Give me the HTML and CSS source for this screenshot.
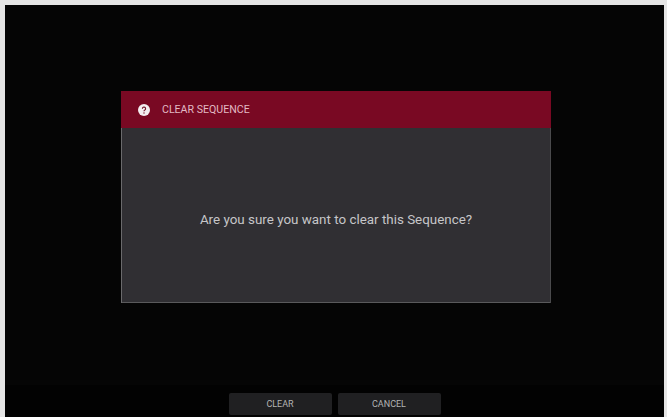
FILE: index.html
```html
<!DOCTYPE html>
<html lang="en">
  <head>
    <meta charset="UTF-8" />
    <meta name="viewport" content="width=device-width, initial-scale=1.0" />
    <title>Clear Sequence</title>
    <link rel="stylesheet" href="styles.css">
  </head>

  <body>
    <div class="screen">
      <div class="main">
        <div class="dialog">
          <div class="dialog-header">
            <svg class="help-icon" width="12" height="12" viewBox="0 0 12 12">
              <circle cx="6" cy="6" r="6" fill="#f4eef0" />
              <path d="M4.4 4.7a1.6 1.6 0 1 1 2.4 1.4c-.6.3-.8.6-.8 1.1" fill="none" stroke="#6f1226" stroke-width="1.1" />
              <circle cx="6" cy="9" r=".7" fill="#6f1226" />
            </svg>
            <span class="dialog-title">CLEAR SEQUENCE</span>
          </div>
          <div class="dialog-body">
            <p class="dialog-text">Are you sure you want to clear this Sequence?</p>
          </div>
        </div>
      </div>

      <div class="toolbar">
        <button class="toolbar-button">CLEAR</button>
        <button class="toolbar-button">CANCEL</button>
      </div>
    </div>
  </body>
</html>
```

FILE: styles.css
```css
html,
body {
  height: 100%;
}

body {
  margin: 0;
  padding: 5px 3px 0 5px;
  box-sizing: border-box;
  background-color: #e6e6e6;
  font-family: Roboto, "Liberation Sans", sans-serif;
  overflow: hidden;
}

.screen {
  display: flex;
  flex-direction: column;
  height: 100%;
  background-color: #050505;
}

.main {
  flex: 1;
  padding-top: 86px;
  padding-left: 116px;
}

.dialog {
  width: 430px;
  height: 212px;
  display: flex;
  flex-direction: column;
  box-shadow: inset 1px 0 0 #6a6a6c, inset -1px 0 0 #4a4a4c, inset 0 -1px 0 #5a5a5c;
  background-color: #302f33;
}

.dialog-header {
  height: 37px;
  display: flex;
  align-items: center;
  gap: 12px;
  padding-left: 17px;
  background-color: #790923;
}

.help-icon {
  flex: none;
}

.dialog-title {
  font-size: 10.6px;
  color: #e2b9c3;
}

.dialog-body {
  flex: 1;
  display: flex;
  justify-content: center;
  padding-top: 84px;
}

.dialog-text {
  margin: 0;
  font-size: 13.4px;
  line-height: 16px;
  color: #c6c6c8;
}

.toolbar {
  height: 32px;
  display: flex;
  justify-content: center;
  gap: 6px;
  padding-top: 8px;
  box-sizing: border-box;
  background-color: #020202;
}

.toolbar-button {
  width: 103px;
  height: 22px;
  border: none;
  border-radius: 2px;
  padding: 0;
  font-family: inherit;
  font-size: 9px;
  color: #b4b4b4;
  background-color: #202022;
}
```
